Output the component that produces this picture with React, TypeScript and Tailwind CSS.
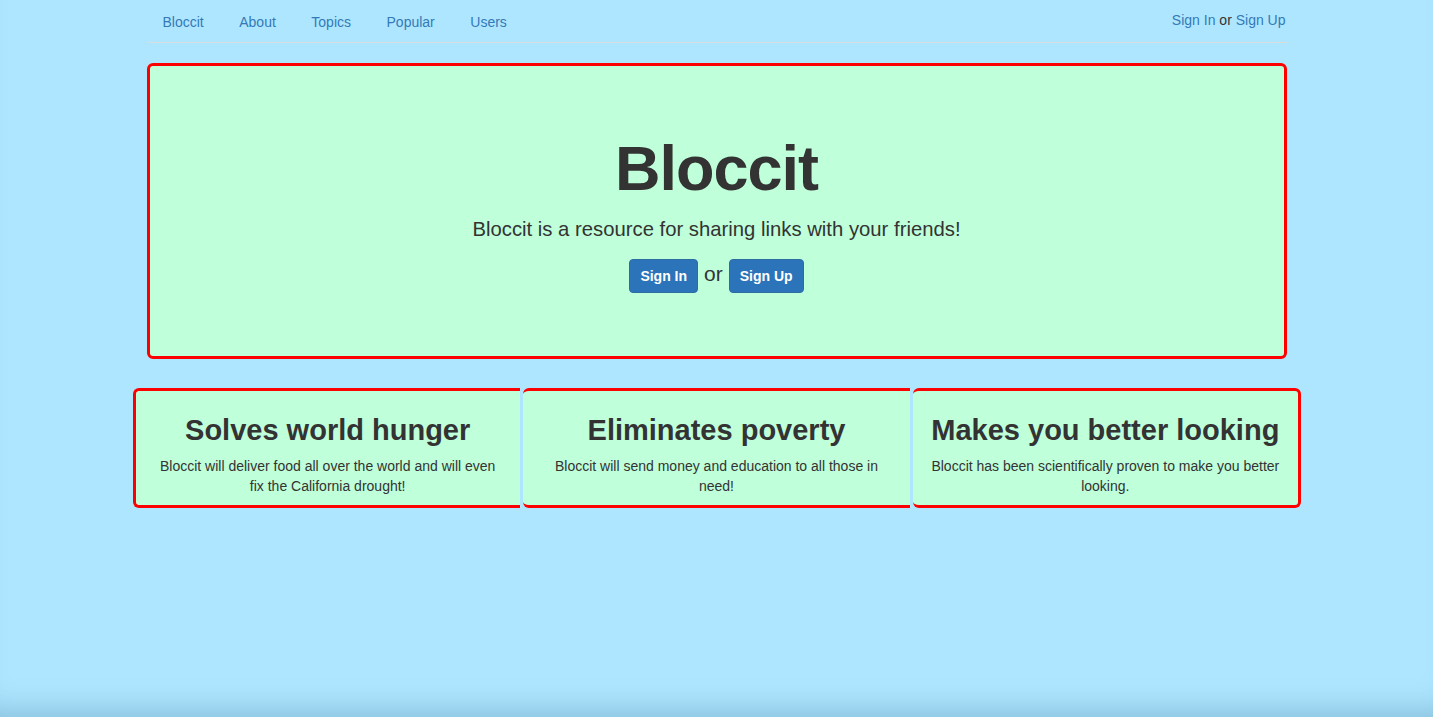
const font = { fontFamily: '"Liberation Sans", Arial, sans-serif' };

const navLinks = ["Bloccit", "About", "Topics", "Popular", "Users"];

const features = [
  {
    title: "Solves world hunger",
    body: "Bloccit will deliver food all over the world and will even fix the California drought!",
    edge: "border-l-[3px]",
  },
  {
    title: "Eliminates poverty",
    body: "Bloccit will send money and education to all those in need!",
    edge: "",
  },
  {
    title: "Makes you better looking",
    body: "Bloccit has been scientifically proven to make you better looking.",
    edge: "border-r-[3px] rounded-r-[6px]",
  },
];

export default function App() {
  return (
    <div
      style={font}
      className="min-h-[717px] bg-[#afe6ff] text-[#333333] text-[14px] leading-[20px] shadow-[inset_0_-30px_30px_-22px_rgba(0,60,100,0.22)]"
    >
      {/* Top nav */}
      <div className="mx-auto w-[1140px]">
        <div className="flex items-start justify-between border-b border-[#d9dde0]">
          <ul className="flex">
            {navLinks.map((l) => (
              <li key={l} className="mr-[3.5px]">
                <a className="block border border-transparent px-[15px] pt-[11px] pb-[9px] text-[#337ab7]">
                  {l}
                </a>
              </li>
            ))}
          </ul>
          <div className="pt-[10px] pr-[1px]">
            <a className="text-[#337ab7]">Sign In</a> or{" "}
            <a className="text-[#337ab7]">Sign Up</a>
          </div>
        </div>

        {/* Hero */}
        <div className="mt-[20px] flex flex-col items-center rounded-[6px] border-[3px] border-[#ff0000] bg-[#bfffda] pt-[68px] pb-[63px]">
          <h1 className="text-[63px] leading-[69px] font-bold tracking-[-1px]">Bloccit</h1>
          <p className="mt-[11px] text-[20.3px] leading-[30px]">
            Bloccit is a resource for sharing links with your friends!
          </p>
          <div className="mt-[15px] flex items-baseline text-[21px] leading-[30px]">
            <button className="h-[34px] rounded-[4px] border border-[#2e6da4] bg-[#2b74b9] px-[10px] text-[14px] leading-[20px] font-bold text-white">
              Sign In
            </button>
            <span className="mx-[6px]">or</span>
            <button className="h-[34px] rounded-[4px] border border-[#2e6da4] bg-[#2b74b9] px-[10px] text-[14px] leading-[20px] font-bold text-white">
              Sign Up
            </button>
          </div>
        </div>
      </div>

      {/* Features */}
      <div className="mx-auto mt-[29px] grid w-[1168px] grid-cols-3 gap-[3px]">
        {features.map((f) => (
          <div
            key={f.title}
            className={`rounded-l-[6px] border-y-[3px] border-[#ff0000] bg-[#bfffda] px-[17px] pt-[23px] pb-[9px] text-center ${f.edge}`}
          >
            <h3 className="text-[29px] leading-[33px] font-bold whitespace-nowrap">
              {f.title}
            </h3>
            <p className="mt-[9px]">{f.body}</p>
          </div>
        ))}
      </div>
    </div>
  );
}
